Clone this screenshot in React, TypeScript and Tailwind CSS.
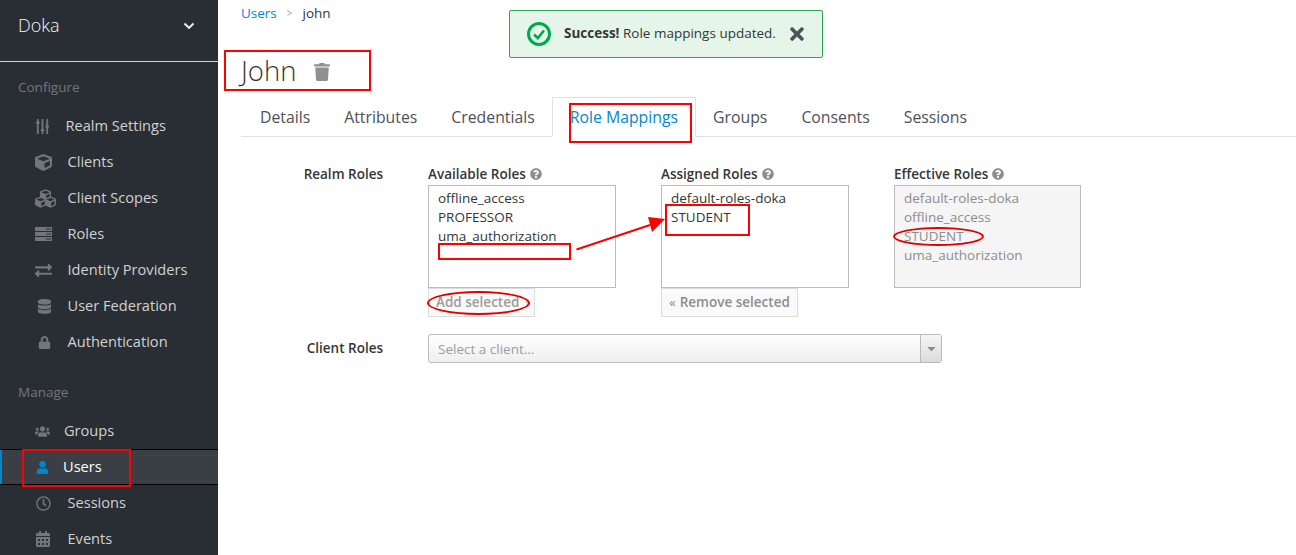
import React from "react";
import { FaSlidersH, FaCube, FaCubes, FaExchangeAlt, FaDatabase, FaLock, FaUsers, FaUser, FaRegClock, FaCalendarAlt, FaTrash, FaQuestionCircle, FaTimes, FaCaretDown } from "react-icons/fa";

function RolesIcon() {
  return (
    <svg width="17" height="14" viewBox="0 0 17 14" fill="currentColor">
      <path d="M0 0h17v4H0zM0 5h17v4H0zM0 10h17v4H0z" />
      <path d="M11 1.5h5v1h-5zM11 6.5h5v1h-5zM11 11.5h5v1h-5z" fill="#292e34" />
    </svg>
  );
}

type Item = { label: string; icon: React.ReactNode; pl: string; active?: boolean };

function NavRow({ label, icon, pl, active }: Item) {
  if (active) {
    return (
      <div className="relative flex h-[36px] items-center border-y border-black bg-[#393f44] text-white">
        <span className="absolute left-0 top-0 h-full w-[2px] bg-[#0088ce]" />
        <span className="flex w-[63px] shrink-0 pl-[36px] text-[#0088ce]">{icon}</span>
        <span>{label}</span>
      </div>
    );
  }
  return (
    <div className="flex h-9 items-center text-[#d1d1d1]">
      <span className="flex w-[35px] shrink-0" />
      <span className="flex w-[32.5px] shrink-0 items-center text-[#72767b]">{icon}</span>
      <span className={pl}>{label}</span>
    </div>
  );
}

const configure: Item[] = [
  { label: "Realm Settings", icon: <FaSlidersH className="rotate-90" size={15} />, pl: "-ml-[2px]" },
  { label: "Clients", icon: <FaCube size={17} />, pl: "" },
  { label: "Client Scopes", icon: <FaCubes size={21} />, pl: "" },
  { label: "Roles", icon: <RolesIcon />, pl: "" },
  { label: "Identity Providers", icon: <FaExchangeAlt size={17} />, pl: "" },
  { label: "User Federation", icon: <FaDatabase size={15} className="ml-[2px]" />, pl: "" },
  { label: "Authentication", icon: <FaLock size={13} className="ml-[3px]" />, pl: "" },
];

function Sidebar() {
  return (
    <aside className="h-[555px] w-[218px] shrink-0 overflow-hidden bg-[#292e34] text-[14.6px]">
      <div className="flex h-[62px] items-start justify-between border-b border-[#d1d1d1] pl-[18px] pr-[23px] pt-[11px] text-[#f5f5f5]">
        <span className="text-[18px] font-light leading-[28px]">Doka</span>
        <svg width="12" height="8" viewBox="0 0 12 8" className="mt-[11px]" fill="none" stroke="currentColor" strokeWidth="1.8">
          <polyline points="1.5,1.5 6,6 10.5,1.5" />
        </svg>
      </div>
      <div className="pl-[18px] pt-[16px] text-[13.5px] leading-[18px] text-[#72767b]">Configure</div>
      <div className="pt-[12px]">
        {configure.map((i) => (
          <NavRow key={i.label} {...i} />
        ))}
      </div>
      <div className="pl-[18px] pt-[23px] text-[13.5px] leading-[18px] text-[#72767b]">Manage</div>
      <div className="pt-[12px]">
        <NavRow label="Groups" icon={<FaUsers size={15} />} pl="-ml-[3.5px]" />
        <NavRow label="Users" icon={<FaUser size={13} />} pl="" active />
        <NavRow label="Sessions" icon={<FaRegClock size={15} className="ml-[1px]" />} pl="" />
        <NavRow label="Events" icon={<FaCalendarAlt size={16} />} pl="" />
      </div>
    </aside>
  );
}

function ColLabel({ children }: { children: React.ReactNode }) {
  return (
    <div className="flex h-[20px] items-center gap-[4px] text-[13.5px] font-semibold text-[#363636]">
      {children}
      <FaQuestionCircle size={12} className="text-[#8b8d8f]" />
    </div>
  );
}

function ListBox({ items, disabled }: { items: string[]; disabled?: boolean }) {
  return (
    <div
      className={
        disabled
          ? "h-[103px] w-[187px] border border-[#bbb] bg-[#f5f5f5] pl-[9px] pt-[3px] text-[13.5px] leading-[19px] text-[#8b8d8f]"
          : "h-[103px] w-[188px] border border-[#bbb] bg-white pl-[9px] pt-[3px] text-[13.5px] leading-[19px] text-[#363636]"
      }
    >
      {items.map((t) => (
        <div key={t}>{t}</div>
      ))}
    </div>
  );
}

function Annotations() {
  return (
    <>
      <div className="absolute left-[22px] top-[449px] h-[38px] w-[109px] border-2 border-[#ff0000]" />
      <div className="absolute left-[224px] top-[50px] h-[41px] w-[147px] border-2 border-[#ff0000]" />
      <div className="absolute left-[569px] top-[103px] h-[40px] w-[123px] border-2 border-[#ff0000]" />
      <div className="absolute left-[438px] top-[243px] h-[17px] w-[133px] border-2 border-[#ff0000]" />
      <div className="absolute left-[665px] top-[204px] h-[32px] w-[85px] border-2 border-[#ff0000]" />
      <div className="absolute left-[427px] top-[291px] h-[24px] w-[103px] rounded-[50%] border-2 border-[#e00000]" />
      <div className="absolute left-[893px] top-[227px] h-[19px] w-[91px] rounded-[50%] border-2 border-[#e00000]" />
      <svg className="absolute left-[570px] top-[210px]" width="100" height="45" viewBox="0 0 100 45">
        <line x1="6.5" y1="39.5" x2="80" y2="15" stroke="#ff0000" strokeWidth="2" />
        <polygon points="95,9 78,7 82,22" fill="#ff0000" />
      </svg>
    </>
  );
}

export default function App() {
  return (
    <div
      className="relative flex h-[555px] w-[1296px] overflow-hidden bg-white"
      style={{ fontFamily: '"Open Sans", sans-serif' }}
    >
      <Sidebar />
      <main className="min-w-0 flex-1 pl-[23px] text-[#363636]">
        <div className="flex h-[27px] items-center gap-[10px] text-[13.5px]">
          <span className="text-[#0088ce]">Users</span>
          <span className="text-[10px] text-[#9c9c9c]">&gt;</span>
          <span>john</span>
        </div>
        <div className="flex h-[70px] items-start gap-[17px] pt-[25px]">
          <h1 className="text-[27.5px] font-light leading-[38px] text-[#363636]">John</h1>
          <FaTrash size={18} className="mt-[11px] text-[#909090]" />
        </div>
        <div className="flex h-[40px] items-end border-b border-[#e1e1e1] text-[15.8px] text-[#4d5258]">
          <span className="ml-[2px] flex h-[39px] items-center px-[17px] pt-[2px]">Details</span>
          <span className="flex h-[39px] items-center px-[17px] pt-[2px]">Attributes</span>
          <span className="flex h-[39px] items-center px-[17px] pt-[2px]">Credentials</span>
          <span className="-mb-px flex h-[40px] items-center border border-b-white border-[#e1e1e1] bg-white px-[17px] pt-[2px] text-[#0088ce]">Role Mappings</span>
          <span className="flex h-[39px] items-center px-[17px] pt-[2px]">Groups</span>
          <span className="flex h-[39px] items-center px-[17px] pt-[2px]">Consents</span>
          <span className="flex h-[39px] items-center px-[17px] pt-[2px]">Sessions</span>
        </div>
        <div className="flex pt-[27px]">
          <div className="w-[142px] text-right text-[13.5px] font-semibold leading-[20px] text-[#363636]">Realm Roles</div>
          <div className="ml-[45px] w-[188px]">
            <ColLabel>Available Roles</ColLabel>
            <div className="pt-[1px]">
              <ListBox items={["offline_access", "PROFESSOR", "uma_authorization"]} />
            </div>
            <div className="flex h-[29px] w-[107px] items-center gap-[6px] border border-[#dcdcdc] bg-[#fafafa] pl-[7px] text-[13.5px] font-semibold text-[#9c9c9c]">
              Add selected <span className="font-normal">›</span>
            </div>
          </div>
          <div className="ml-[45px] w-[188px]">
            <ColLabel>Assigned Roles</ColLabel>
            <div className="pt-[1px]">
              <ListBox items={["default-roles-doka", "STUDENT"]} />
            </div>
            <div className="flex h-[29px] w-[137px] items-center gap-[4px] border border-[#dcdcdc] bg-[#fafafa] pl-[7px] text-[13.5px] font-semibold text-[#8b8d8f]">
              <span className="font-normal">«</span> Remove selected
            </div>
          </div>
          <div className="ml-[45px] w-[188px]">
            <ColLabel>Effective Roles</ColLabel>
            <div className="pt-[1px]">
              <ListBox disabled items={["default-roles-doka", "offline_access", "STUDENT", "uma_authorization"]} />
            </div>
          </div>
        </div>
        <div className="flex pt-[17px]">
          <div className="w-[142px] pt-[4px] text-right text-[13.5px] font-semibold leading-[20px]">Client Roles</div>
          <div className="ml-[45px] flex h-[29px] w-[514px] overflow-hidden rounded-[3px] border border-[#bbb] bg-gradient-to-b from-white to-[#efefef]">
            <span className="flex-1 pl-[9px] text-[13.5px] leading-[28px] text-[#9c9c9c]">Select a client...</span>
            <span className="flex w-[21px] items-center justify-center border-l border-[#bbb] bg-gradient-to-b from-[#f5f5f5] to-[#dcdcdc] text-[#8b8d8f]">
              <FaCaretDown size={13} />
            </span>
          </div>
        </div>
      </main>
      <div className="absolute left-[509px] top-[10px] flex h-[48px] w-[314px] items-center rounded-[2px] border border-[#2fa84f] bg-[#e5f5e9] pl-[16px] text-[13.5px] text-[#363636]">
        <svg width="26" height="26" viewBox="0 0 26 26" fill="none" stroke="#00a84f" strokeWidth="3">
          <circle cx="13" cy="13" r="10.5" />
          <polyline points="8,13.5 11.8,17 18,9.5" strokeWidth="2.6" />
        </svg>
        <span className="ml-[12px] -mt-[1px]"><b className="font-bold">Success!</b> Role mappings updated.</span>
        <FaTimes size={20} className="ml-[11px] text-[#4d5258]" />
      </div>
      <Annotations />
    </div>
  );
}
